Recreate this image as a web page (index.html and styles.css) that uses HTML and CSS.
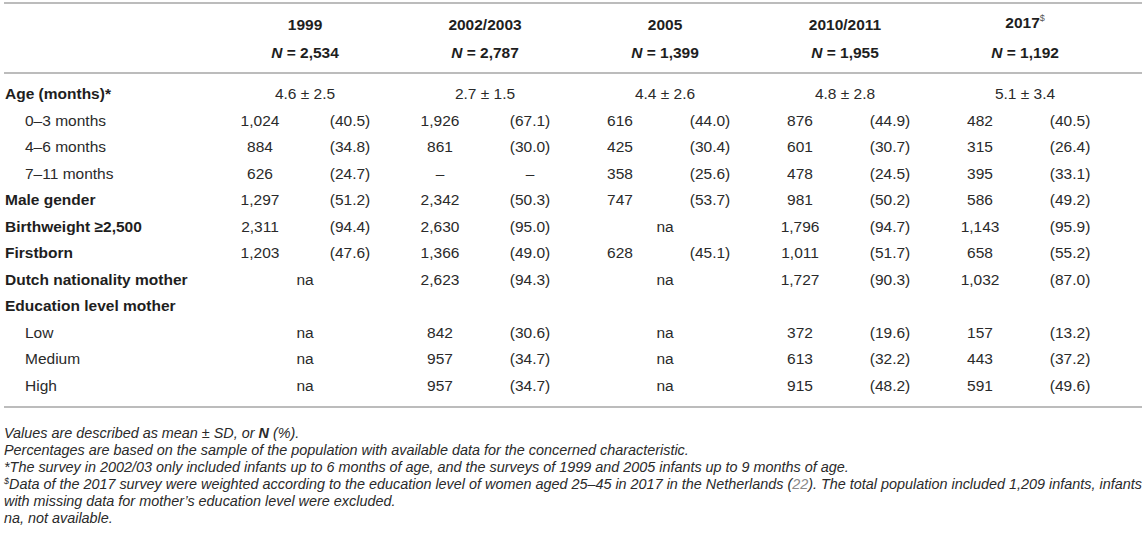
FILE: index.html
```html
<!DOCTYPE html>
<html lang="en">
<head>
<meta charset="utf-8">
<title>Table</title>
<link rel="stylesheet" href="styles.css">
</head>
<body>
<div class="wrap">
  <table class="data">
    <colgroup>
      <col class="c-label">
      <col class="c-sub"><col class="c-sub">
      <col class="c-sub"><col class="c-sub">
      <col class="c-sub"><col class="c-sub">
      <col class="c-sub"><col class="c-sub">
      <col class="c-sub"><col class="c-sub">
      <col class="c-fill">
    </colgroup>
    <thead>
      <tr class="h1">
        <th></th>
        <th colspan="2">1999</th>
        <th colspan="2">2002/2003</th>
        <th colspan="2">2005</th>
        <th colspan="2">2010/2011</th>
        <th colspan="2">2017<sup class="sup">$</sup></th>
        <th></th>
      </tr>
      <tr class="h2">
        <th></th>
        <th colspan="2"><i>N</i> = 2,534</th>
        <th colspan="2"><i>N</i> = 2,787</th>
        <th colspan="2"><i>N</i> = 1,399</th>
        <th colspan="2"><i>N</i> = 1,955</th>
        <th colspan="2"><i>N</i> = 1,192</th>
        <th></th>
      </tr>
    </thead>
    <tbody>
      <tr class="first">
        <td class="lab">Age (months)*</td>
        <td colspan="2">4.6 ± 2.5</td>
        <td colspan="2">2.7 ± 1.5</td>
        <td colspan="2">4.4 ± 2.6</td>
        <td colspan="2">4.8 ± 2.8</td>
        <td colspan="2">5.1 ± 3.4</td>
        <td></td>
      </tr>
      <tr>
        <td class="sub">0–3 months</td>
        <td>1,024</td><td>(40.5)</td>
        <td>1,926</td><td>(67.1)</td>
        <td>616</td><td>(44.0)</td>
        <td>876</td><td>(44.9)</td>
        <td>482</td><td>(40.5)</td>
        <td></td>
      </tr>
      <tr>
        <td class="sub">4–6 months</td>
        <td>884</td><td>(34.8)</td>
        <td>861</td><td>(30.0)</td>
        <td>425</td><td>(30.4)</td>
        <td>601</td><td>(30.7)</td>
        <td>315</td><td>(26.4)</td>
        <td></td>
      </tr>
      <tr>
        <td class="sub">7–11 months</td>
        <td>626</td><td>(24.7)</td>
        <td>–</td><td>–</td>
        <td>358</td><td>(25.6)</td>
        <td>478</td><td>(24.5)</td>
        <td>395</td><td>(33.1)</td>
        <td></td>
      </tr>
      <tr>
        <td class="lab">Male gender</td>
        <td>1,297</td><td>(51.2)</td>
        <td>2,342</td><td>(50.3)</td>
        <td>747</td><td>(53.7)</td>
        <td>981</td><td>(50.2)</td>
        <td>586</td><td>(49.2)</td>
        <td></td>
      </tr>
      <tr>
        <td class="lab">Birthweight ≥2,500</td>
        <td>2,311</td><td>(94.4)</td>
        <td>2,630</td><td>(95.0)</td>
        <td colspan="2">na</td>
        <td>1,796</td><td>(94.7)</td>
        <td>1,143</td><td>(95.9)</td>
        <td></td>
      </tr>
      <tr>
        <td class="lab">Firstborn</td>
        <td>1,203</td><td>(47.6)</td>
        <td>1,366</td><td>(49.0)</td>
        <td>628</td><td>(45.1)</td>
        <td>1,011</td><td>(51.7)</td>
        <td>658</td><td>(55.2)</td>
        <td></td>
      </tr>
      <tr>
        <td class="lab">Dutch nationality mother</td>
        <td colspan="2">na</td>
        <td>2,623</td><td>(94.3)</td>
        <td colspan="2">na</td>
        <td>1,727</td><td>(90.3)</td>
        <td>1,032</td><td>(87.0)</td>
        <td></td>
      </tr>
      <tr>
        <td class="lab">Education level mother</td>
        <td colspan="2"></td>
        <td colspan="2"></td>
        <td colspan="2"></td>
        <td colspan="2"></td>
        <td colspan="2"></td>
        <td></td>
      </tr>
      <tr>
        <td class="sub">Low</td>
        <td colspan="2">na</td>
        <td>842</td><td>(30.6)</td>
        <td colspan="2">na</td>
        <td>372</td><td>(19.6)</td>
        <td>157</td><td>(13.2)</td>
        <td></td>
      </tr>
      <tr>
        <td class="sub">Medium</td>
        <td colspan="2">na</td>
        <td>957</td><td>(34.7)</td>
        <td colspan="2">na</td>
        <td>613</td><td>(32.2)</td>
        <td>443</td><td>(37.2)</td>
        <td></td>
      </tr>
      <tr class="last">
        <td class="sub">High</td>
        <td colspan="2">na</td>
        <td>957</td><td>(34.7)</td>
        <td colspan="2">na</td>
        <td>915</td><td>(48.2)</td>
        <td>591</td><td>(49.6)</td>
        <td></td>
      </tr>
    </tbody>
  </table>
  <div class="notes">
    <p>Values are described as mean ± SD, or <b>N</b> (%).</p>
    <p>Percentages are based on the sample of the population with available data for the concerned characteristic.</p>
    <p>*The survey in 2002/03 only included infants up to 6 months of age, and the surveys of 1999 and 2005 infants up to 9 months of age.</p>
    <p><sup class="nsup">$</sup>Data of the 2017 survey were weighted according to the education level of women aged 25–45 in 2017 in the Netherlands (<span class="ref">22</span>). The total population included 1,209 infants, infants with missing data for mother’s education level were excluded.</p>
    <p>na, not available.</p>
  </div>
</div>
</body>
</html>
```

FILE: styles.css
```css
html, body {
  margin: 0;
  padding: 0;
  background: #ffffff;
}

body {
  font-family: "Liberation Sans", Arial, Helvetica, sans-serif;
  color: #2a2a2a;
}

.wrap {
  padding: 2px 4px 0 4px;
}

.data {
  width: 1138px;
  table-layout: fixed;
  border-collapse: collapse;
  border-top: 2px solid #bcbcbc;
  border-bottom: 2px solid #bcbcbc;
  font-size: 15.5px;
}

.c-label { width: 211px; }
.c-sub { width: 90px; }
.c-fill { width: 27px; }

.data th,
.data td {
  padding: 0;
  text-align: center;
  white-space: nowrap;
  line-height: 26.5px;
}

.data th {
  font-weight: bold;
  color: #1e1e1e;
  line-height: 27px;
}

.data th i {
  font-style: italic;
}

.h1 th {
  padding-top: 5px;
}

.h2 th {
  padding-bottom: 6px;
  border-bottom: 2px solid #bcbcbc;
}

.sup {
  font-size: 9px;
  font-weight: normal;
  vertical-align: 0;
  position: relative;
  top: -7px;
  color: #555;
}

.first td {
  padding-top: 7px;
}

.last td {
  padding-bottom: 7px;
}

.data td.lab {
  text-align: left;
  font-weight: bold;
  color: #1e1e1e;
  padding-left: 1px;
}

.data td.sub {
  text-align: left;
  padding-left: 21px;
}

.notes {
  margin-top: 17px;
  width: 1138px;
  font-size: 14.4px;
  font-style: italic;
  line-height: 17px;
  color: #2a2a2a;
}

.notes p {
  margin: 0;
}

.notes b {
  font-weight: bold;
}

.nsup {
  font-size: 9px;
  line-height: 0;
  vertical-align: 0;
  position: relative;
  top: -5px;
}

.ref {
  color: #8a8a8a;
}
```
